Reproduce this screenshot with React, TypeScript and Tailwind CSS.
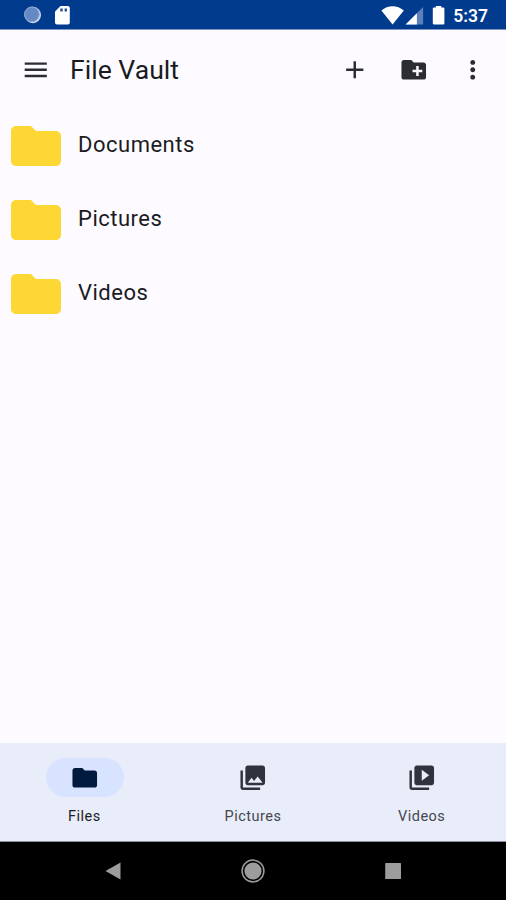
import React from "react";

const FOLDER =
  "M10 4H4c-1.1 0-1.99.9-1.99 2L2 18c0 1.1.9 2 2 2h16c1.1 0 2-.9 2-2V8c0-1.1-.9-2-2-2h-8l-2-2z";
const FOLDER_ADD =
  "M20 6h-8l-2-2H4c-1.11 0-1.99.89-1.99 2L2 18c0 1.11.89 2 2 2h16c1.11 0 2-.89 2-2V8c0-1.11-.89-2-2-2zm-1 8h-3v3h-2v-3h-3v-2h3V9h2v3h3v2z";
const MENU = "M3 18h18v-2H3v2zm0-5h18v-2H3v2zm0-7v2h18V6H3z";
const ADD = "M19 13h-6v6h-2v-6H5v-2h6V5h2v6h6v2z";
const MORE =
  "M12 8c1.1 0 2-.9 2-2s-.9-2-2-2-2 .9-2 2 .9 2 2 2zm0 2c-1.1 0-2 .9-2 2s.9 2 2 2 2-.9 2-2-.9-2-2-2zm0 6c-1.1 0-2 .9-2 2s.9 2 2 2 2-.9 2-2-.9-2-2-2z";
const PHOTOS =
  "M22 16V4c0-1.1-.9-2-2-2H8c-1.1 0-2 .9-2 2v12c0 1.1.9 2 2 2h12c1.1 0 2-.9 2-2zm-11-4l2.03 2.71L16 11l4 5H8l3-4zM2 6v14c0 1.1.9 2 2 2h14v-2H4V6H2z";
const VIDEOS =
  "M4 6H2v14c0 1.1.9 2 2 2h14v-2H4V6zm16-4H8c-1.1 0-2 .9-2 2v12c0 1.1.9 2 2 2h12c1.1 0 2-.9 2-2V4c0-1.1-.9-2-2-2zm-8 12.5v-9l6 4.5-6 4.5z";

const folders = ["Documents", "Pictures", "Videos"];

const tabs = [
  { label: "Files", path: FOLDER, active: true },
  { label: "Pictures", path: PHOTOS, active: false },
  { label: "Videos", path: VIDEOS, active: false },
];

const Icon = ({ path, className = "" }: { path: string; className?: string }) => (
  <svg viewBox="0 0 24 24" fill="currentColor" className={`shrink-0 ${className}`}>
    <path d={path} />
  </svg>
);

const StatusBar = () => (
  <div className="flex h-[30px] items-center justify-between border-b border-[#7f93c4] bg-[#003b8e] text-white">
    <svg width="80" height="29" viewBox="0 0 80 29">
      <circle cx="32.8" cy="15" r="8.2" fill="#d5def0" />
      <circle cx="31.7" cy="14.2" r="7.4" fill="#6489c4" />
      <circle cx="31.9" cy="14.4" r="7.4" fill="none" stroke="#8ba7d5" strokeWidth="1" />
      <path
        d="M60.5 6h7.3a2 2 0 0 1 2 2v14.6a2 2 0 0 1-2 2H57a2 2 0 0 1-2-2V11.5z"
        fill="#fff"
      />
      <path d="M60.3 8.5h2.4v3h-2.4zM64.6 8.5h2.4v3h-2.4z" fill="#26508f" />
    </svg>
    <div className="flex items-center pr-[18px]">
      <svg width="72" height="29" viewBox="377.4 0 72 29">
        <path d="M392 24.5 380.8 10.6C384 7.6 388 6.2 392 6.2s8 1.4 11.2 4.4z" fill="#fff" />
        <path d="M405 24.5 422.5 7v17.5z" fill="#5b80bb" />
        <path d="M405 24.5 416.3 13.2v11.3z" fill="#fff" />
        <path
          d="M435.3 6h5.4v1.500h1.800a1.300 1.300 0 0 1 1.300 1.300v14.500a1.300 1.300 0 0 1-1.300 1.300h-9a1.300 1.300 0 0 1-1.300-1.300v-14.500A1.300 1.300 0 0 1 433.500 7.500h1.800z"
          fill="#fff"
        />
      </svg>
      <span className="mt-[3px] ml-[3px] text-[17.5px] leading-5 font-semibold">5:37</span>
    </div>
  </div>
);

const AppBar = () => (
  <header className="flex h-[79px] items-center pr-[19px] pl-[20.5px] text-[#2b2d32]">
    <Icon path={MENU} className="size-[29.5px]" />
    <h1 className="ml-[20px] flex-1 text-[26.6px] leading-8 text-[#1b1b1f]">File Vault</h1>
    <div className="flex gap-[29.5px]">
      <Icon path={ADD} className="size-[29.5px]" />
      <Icon path={FOLDER_ADD} className="size-[29.5px]" />
      <Icon path={MORE} className="size-[29.5px]" />
    </div>
  </header>
);

const BottomTabs = () => (
  <nav className="grid h-[99px] grid-cols-3 border-b border-[#8d909b] bg-[#e9edf9] pt-[15px]">
    {tabs.map((tab) => (
      <div key={tab.label} className="flex flex-col items-center">
        <div
          className={`flex h-[39px] w-[78px] items-center justify-center rounded-full ${
            tab.active ? "ml-px bg-[#d7e3ff] text-[#001a40]" : "text-[#30333d]"
          }`}
        >
          <Icon path={tab.path} className="size-[29.5px]" />
        </div>
        <span
          className={`mt-[10px] text-[14.5px] leading-5 tracking-[0.5px] ${
            tab.active ? "text-[#1b1b1f]" : "text-[#44474e]"
          }`}
        >
          {tab.label}
        </span>
      </div>
    ))}
  </nav>
);

const SystemNav = () => (
  <div className="flex h-[58px] items-center justify-center gap-[110px] bg-black">
    <svg width="30" height="30" viewBox="0 0 30 30">
      <path d="M7.5 15 22.5 6.5v17z" fill="#9c9c9c" />
    </svg>
    <svg width="30" height="30" viewBox="0 0 30 30">
      <circle cx="15" cy="15" r="10.9" fill="none" stroke="#9c9c9c" strokeWidth="1.5" />
      <circle cx="15" cy="15" r="8.6" fill="#9c9c9c" />
    </svg>
    <svg width="30" height="30" viewBox="0 0 30 30">
      <rect x="7.2" y="7" width="15.8" height="16" rx="0.6" fill="#9c9c9c" />
    </svg>
  </div>
);

const App = () => {
  return (
    <div className="flex h-[900px] w-[506px] flex-col overflow-hidden bg-[#fdfbff] font-[Roboto,sans-serif]">
      <StatusBar />
      <AppBar />
      <main className="flex-1">
        {folders.map((name) => (
          <div key={name} className="flex h-[74px] items-center pl-[6px] text-[#1b1b1f]">
            <Icon path={FOLDER} className="size-[60px] text-[#fdd835]" />
            <span className="mb-[2px] ml-[12px] text-[22px] leading-7 tracking-[0.5px]">{name}</span>
          </div>
        ))}
      </main>
      <BottomTabs />
      <SystemNav />
    </div>
  );
};

export default App;
